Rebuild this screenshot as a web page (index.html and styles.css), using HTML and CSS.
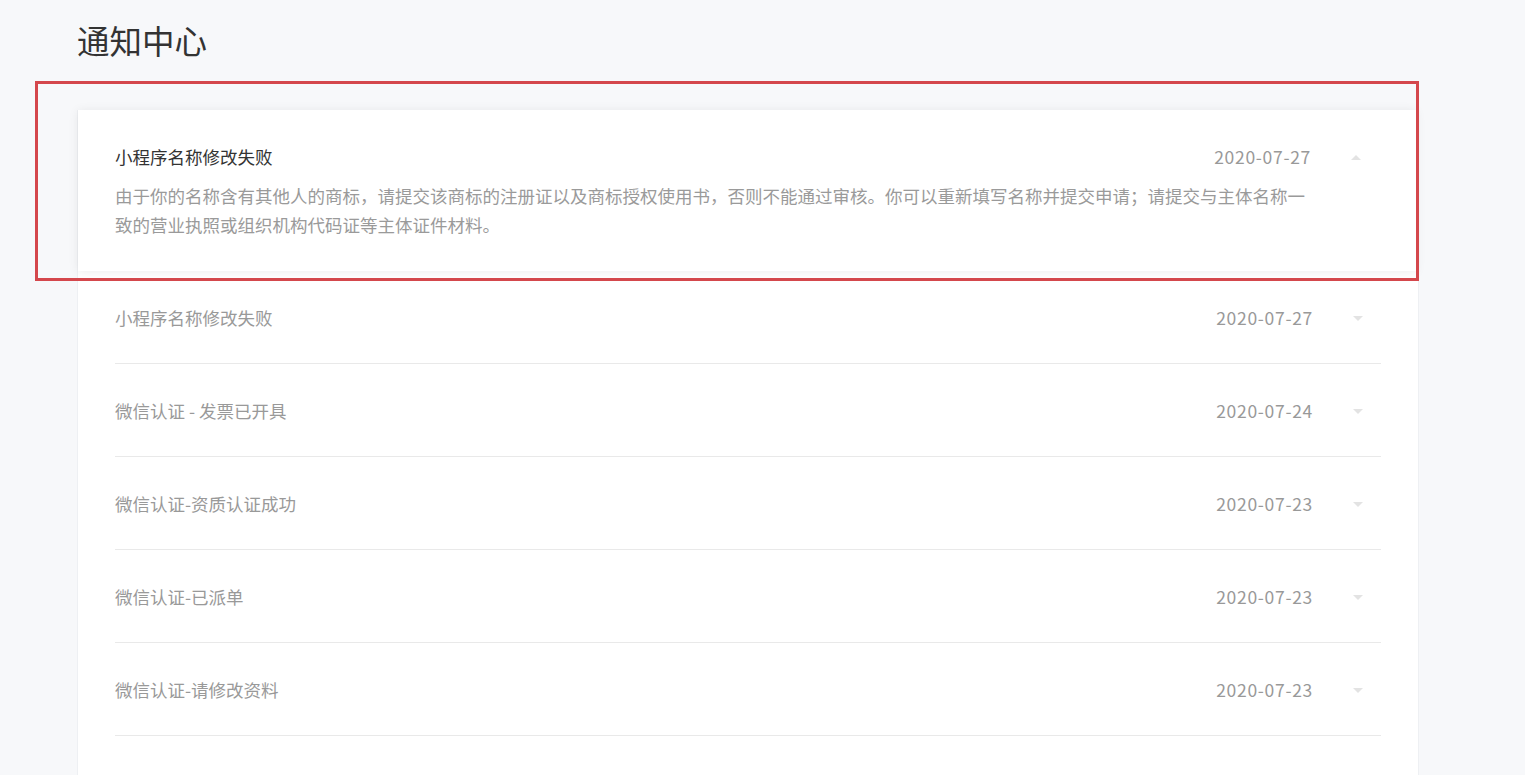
FILE: index.html
```html
<!DOCTYPE html>
<html lang="zh-CN">
<head>
<meta charset="utf-8">
<title>通知中心</title>
<link rel="stylesheet" href="styles.css">
</head>
<body>
<div class="page">
  <h1 class="page-title">通知中心</h1>
  <div class="panel">
    <div class="item item-open">
      <div class="item-head">
        <span class="item-title">小程序名称修改失败</span>
        <span class="item-date">2020-07-27</span>
        <span class="caret caret-up"></span>
      </div>
      <p class="item-desc">由于你的名称含有其他人的商标，请提交该商标的注册证以及商标授权使用书，否则不能通过审核。你可以重新填写名称并提交申请；请提交与主体名称一致的营业执照或组织机构代码证等主体证件材料。</p>
    </div>
    <div class="row">
      <span class="item-title">小程序名称修改失败</span>
      <span class="item-date">2020-07-27</span>
      <span class="caret caret-down"></span>
    </div>
    <div class="row">
      <span class="item-title">微信认证 - 发票已开具</span>
      <span class="item-date">2020-07-24</span>
      <span class="caret caret-down"></span>
    </div>
    <div class="row">
      <span class="item-title">微信认证-资质认证成功</span>
      <span class="item-date">2020-07-23</span>
      <span class="caret caret-down"></span>
    </div>
    <div class="row">
      <span class="item-title">微信认证-已派单</span>
      <span class="item-date">2020-07-23</span>
      <span class="caret caret-down"></span>
    </div>
    <div class="row">
      <span class="item-title">微信认证-请修改资料</span>
      <span class="item-date">2020-07-23</span>
      <span class="caret caret-down"></span>
    </div>
  </div>
  <div class="highlight"></div>
</div>
</body>
</html>
```

FILE: styles.css
```css
html, body {
  margin: 0;
  padding: 0;
  background: #f7f8fa;
  font-family: "Noto Sans CJK SC", "Noto Sans", sans-serif;
}
.page {
  position: relative;
  padding: 20px 107px 0 78px;
  height: 755px;
  overflow: hidden;
}
.page-title {
  margin: 0 0 50px -1px;
  font-size: 32.5px;
  line-height: 40px;
  font-weight: 400;
  color: #333;
}
.panel {
  background: #fff;
  width: 1340px;
  min-height: 700px;
  box-shadow: -1px 0 0 #eef0f3, 1px 0 0 #eef0f3;
}
.item-open {
  width: 1338px;
  box-sizing: border-box;
  padding: 33px 37px 32px;
  background: #fff;
  box-shadow: 0 1px 10px rgba(0, 0, 0, 0.08);
  position: relative;
}
.item-head, .row {
  display: flex;
  align-items: center;
  font-size: 17.5px;
  line-height: 28px;
}
.item-open .item-title {
  color: #333;
}
.item-title {
  flex: 1;
  color: #999;
}
.item-date {
  color: #999;
  letter-spacing: 0.7px;
}
.caret {
  width: 0;
  height: 0;
  margin: 0 18px 0 40px;
  border-left: 5px solid transparent;
  border-right: 5px solid transparent;
}
.caret-up {
  border-bottom: 5px solid #e3e3e3;
}
.caret-down {
  border-top: 5px solid #e3e3e3;
}
.item-desc {
  margin: 10px 0 0;
  width: 1195px;
  font-size: 17.5px;
  line-height: 29px;
  color: #9a9a9a;
}
.row {
  margin: 0 37px;
  padding: 33px 0 31px;
  border-bottom: 1px solid #e9e9e9;
}
.highlight {
  position: absolute;
  left: 35px;
  top: 81px;
  width: 1378px;
  height: 194px;
  border: 3px solid #d4474c;
  pointer-events: none;
}
```
